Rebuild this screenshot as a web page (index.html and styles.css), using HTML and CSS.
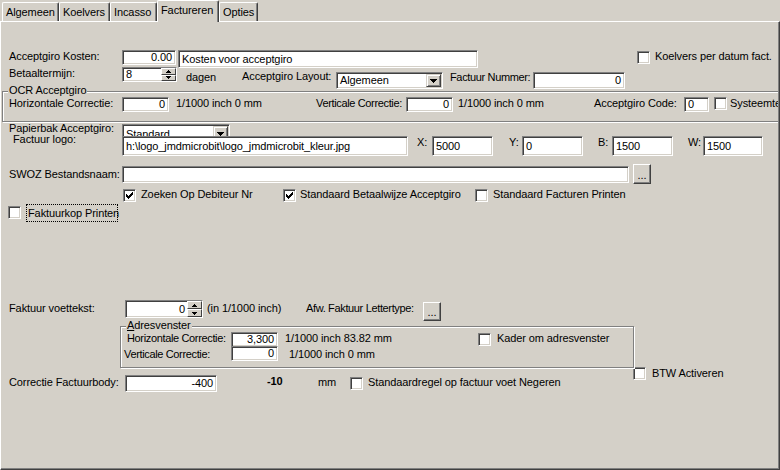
FILE: index.html
```html
<!DOCTYPE html>
<html lang="nl">
<head>
<meta charset="utf-8">
<title>Factureren</title>
<link rel="stylesheet" href="styles.css">
</head>
<body>
<div class="tabs">
  <div class="tab tab-alg">Algemeen</div>
  <div class="tab tab-koel">Koelvers</div>
  <div class="tab tab-inc">Incasso</div>
  <div class="tab tab-fac active">Factureren</div>
  <div class="tab tab-opt">Opties</div>
</div>
<div class="page">
 <div class="pagebody">

  <div class="row r-kosten">
    <span class="t lab mt1">Acceptgiro Kosten:</span>
    <div class="edit r e-kosten mt1">0.00</div>
    <div class="edit e-omschr ml2 mt1">Kosten voor acceptgiro</div>
    <span class="chk ml159 mt2"></span>
    <span class="t ml5 mt1">Koelvers per datum fact.</span>
  </div>

  <div class="row r-termijn">
    <span class="t lab">Betaaltermijn:</span>
    <div class="edit spin e-termijn"><span class="val">8</span><span class="spinbtns"><span class="sb"><svg width="5" height="3" viewBox="0 0 5 3"><path d="M2 0h1v1h1v1h1v1h-5v-1h1v-1h1z"/></svg></span><span class="sb"><svg width="5" height="3" viewBox="0 0 5 3"><path d="M0 0h5v1h-1v1h-1v1h-1v-1h-1v-1h-1z"/></svg></span></span></div>
    <span class="t ml9 mt4 w56">dagen</span>
    <span class="t mt3 w94">Acceptgiro Layout:</span>
    <div class="edit combo e-layout mt5"><span class="val">Algemeen</span><span class="cbtn"><svg width="7" height="4" viewBox="0 0 7 4"><path d="M0 0h7v1h-1v1h-1v1h-1v1h-1v-1h-1v-1h-1v-1h-1z"/></svg></span></div>
    <span class="t tight ml7 mt4 w83">Factuur Nummer:</span>
    <div class="edit r e-nummer mt5">0</div>
  </div>

  <div class="group g-ocr">
    <span class="gcap">OCR Acceptgiro</span>
    <div class="row r-ocr">
      <span class="t lab-g">Horizontale Correctie:</span>
      <div class="edit r e-corr">0</div>
      <span class="t ml7 w140">1/1000 inch 0 mm</span>
      <span class="t tight w90">Verticale Correctie:</span>
      <div class="edit r e-corr">0</div>
      <span class="t ml5 w136">1/1000 inch 0 mm</span>
      <span class="t w90">Acceptgiro Code:</span>
      <div class="edit e-code">0</div>
      <span class="chk ml5"></span>
      <span class="t ml3">Systeemtekst</span>
    </div>
  </div>

  <div class="row r-papier">
    <span class="t lab mt-1">Papierbak Acceptgiro:</span>
    <div class="edit combo e-papier mt1"><span class="val">Standard</span><span class="cbtn"><svg width="7" height="4" viewBox="0 0 7 4"><path d="M0 0h7v1h-1v1h-1v1h-1v1h-1v-1h-1v-1h-1v-1h-1z"/></svg></span></div>
  </div>

  <div class="row r-logo">
    <span class="t lab lab-logo mt-1">Factuur logo:</span>
    <div class="edit e-logo mt2">h:\logo_jmdmicrobit\logo_jmdmicrobit_kleur.jpg</div>
    <span class="t ml9 mt2 w15">X:</span>
    <div class="edit e-xy mt2">5000</div>
    <span class="t ml16 mt2 w13">Y:</span>
    <div class="edit e-xy mt2">0</div>
    <span class="t ml15 mt2 w14">B:</span>
    <div class="edit e-xy mt2">1500</div>
    <span class="t ml15 mt2 w15">W:</span>
    <div class="edit e-w mt2">1500</div>
  </div>

  <div class="row r-swoz">
    <span class="t lab mt4">SWOZ Bestandsnaam:</span>
    <div class="edit e-swoz mt2"></div>
    <div class="btn b-swoz ml4">...</div>
  </div>

  <div class="row r-opties">
    <span class="chk ml122"><svg width="9" height="9" viewBox="0 0 9 9" shape-rendering="crispEdges"><path d="M7 1h1v1h-1zM6 2h2v1h-2zM1 3h1v1h-1zM5 3h3v1h-3zM1 4h2v1h-2zM4 4h3v1h-3zM1 5h5v1h-5zM2 6h3v1h-3zM3 7h1v1h-1z"/></svg></span>
    <span class="t ml5 mt-1 w142">Zoeken Op Debiteur Nr</span>
    <span class="chk"><svg width="9" height="9" viewBox="0 0 9 9" shape-rendering="crispEdges"><path d="M7 1h1v1h-1zM6 2h2v1h-2zM1 3h1v1h-1zM5 3h3v1h-3zM1 4h2v1h-2zM4 4h3v1h-3zM1 5h5v1h-5zM2 6h3v1h-3zM3 7h1v1h-1z"/></svg></span>
    <span class="t ml4 mt-1 w175">Standaard Betaalwijze Acceptgiro</span>
    <span class="chk"></span>
    <span class="t ml5 mt-1">Standaard Facturen Printen</span>
  </div>

  <div class="row r-kop">
    <span class="chk ml7 mt2"></span>
    <span class="t focus">Faktuurkop Printen</span>
  </div>

  <div class="row r-voet">
    <span class="t lab lab-w mt2">Faktuur voettekst:</span>
    <div class="edit spin r e-voet"><span class="val">0</span><span class="spinbtns"><span class="sb"><svg width="5" height="3" viewBox="0 0 5 3"><path d="M2 0h1v1h1v1h1v1h-5v-1h1v-1h1z"/></svg></span><span class="sb"><svg width="5" height="3" viewBox="0 0 5 3"><path d="M0 0h5v1h-1v1h-1v1h-1v-1h-1v-1h-1z"/></svg></span></span></div>
    <span class="t ml4 mt2 w99">(in 1/1000 inch)</span>
    <span class="t tight mt2 w117">Afw. Faktuur Lettertype:</span>
    <div class="btn b-font mt2">...</div>
  </div>

  <div class="row r-adres">
    <div class="group g-adr">
      <span class="gcap"><u>A</u>dresvenster</span>
      <div class="row r-adr1">
        <span class="t tight lab-a1 mt1">Horizontale Correctie:</span>
        <div class="edit r e-corr mt1">3,300</div>
        <span class="t ml7 mt1 w193">1/1000 inch 83.82 mm</span>
        <span class="chk mt2"></span>
        <span class="t ml6 mt1">Kader om adresvenster</span>
      </div>
      <div class="row r-adr2">
        <span class="t tight lab-a2 mt1">Verticale Correctie:</span>
        <div class="edit r e-corr mt-1">0</div>
        <span class="t ml11 mt1">1/1000 inch 0 mm</span>
      </div>
    </div>
    <span class="chk chk-btw"></span>
    <span class="t ml6 btw-text">BTW Activeren</span>
  </div>

  <div class="row r-body">
    <span class="t lab lab-w mt2">Correctie Factuurbody:</span>
    <div class="edit r e-body mt1">-400</div>
    <span class="t bold ml50 mt1 w51">-10</span>
    <span class="t mt2 w32">mm</span>
    <span class="chk mt3"></span>
    <span class="t ml5 mt2">Standaardregel op factuur voet Negeren</span>
  </div>

 </div>
</div>
</body>
</html>
```
FILE: styles.css
```css
* { box-sizing: border-box; }
html, body { margin: 0; padding: 0; }
body {
  width: 780px;
  height: 470px;
  overflow: hidden;
  background: #d4d0c8;
  color: #000;
  font-family: "Liberation Sans", Arial, sans-serif;
  font-size: 11px;
  line-height: 13px;
  letter-spacing: -0.1px;
}

/* tabs */
.tabs {
  position: relative;
  z-index: 1;
  display: flex;
  align-items: flex-end;
  height: 21px;
  padding-left: 2px;
}
.tab {
  height: 19px;
  padding: 3px 0 0 3px;
  border: 1px solid #fff;
  border-bottom: 0;
  border-right-color: #404040;
  border-radius: 2px 2px 0 0;
  box-shadow: inset -1px 0 0 #808080;
  background: #d4d0c8;
  white-space: nowrap;
}
.tab-alg { width: 57px; }
.tab-koel { width: 51px; }
.tab-inc { width: 47px; }
.tab-fac { width: 62px; }
.tab-opt { width: 39px; }
.tab.active {
  height: 22px;
  margin-bottom: -1px;
}

/* page */
.page {
  height: 449px;
  border-top: 1px solid #fff;
  border-left: 1px solid #fff;
  border-right: 1px solid #404040;
  border-bottom: 1px solid #404040;
}
.pagebody {
  height: 100%;
  border-right: 1px solid #808080;
  border-bottom: 1px solid #808080;
  overflow: hidden;
}

/* rows */
.row { display: flex; align-items: flex-start; }
.row > * { flex-shrink: 0; }
.t { white-space: nowrap; }
.tight { letter-spacing: -0.35px; }
.bold { font-weight: bold; }
.lab { width: 121px; padding-left: 8px; }
.lab-logo { padding-left: 12px; }
.lab-w { width: 124px; }
.lab-g { width: 119px; padding-left: 6px; }
.lab-a1 { width: 110px; padding-left: 6px; }
.lab-a2 { width: 110px; padding-left: 3px; }

.r-kosten { margin-top: 27px; height: 18px; }
.r-termijn { height: 22px; }
.r-ocr { margin-top: 5px; height: 16px; }
.r-papier { margin-top: 1px; height: 11px; }
.r-logo { height: 22px; }
.r-swoz { margin-top: 8px; height: 20px; }
.r-opties { margin-top: 5px; height: 13px; }
.r-kop { margin-top: 2px; height: 18px; }
.r-voet { margin-top: 78px; height: 21px; }
.r-adres { margin-top: 5px; height: 42px; }
.r-adr1 { margin-top: 4px; height: 16px; }
.r-adr2 { height: 16px; }
.r-body { margin-top: 6px; height: 18px; }

/* spacing helpers */
.ml2 { margin-left: 2px; }
.ml3 { margin-left: 3px; }
.ml4 { margin-left: 4px; }
.ml5 { margin-left: 5px; }
.ml6 { margin-left: 6px; }
.ml7 { margin-left: 7px; }
.ml9 { margin-left: 9px; }
.ml11 { margin-left: 11px; }
.ml15 { margin-left: 15px; }
.ml16 { margin-left: 16px; }
.ml50 { margin-left: 50px; }
.ml122 { margin-left: 122px; }
.ml159 { margin-left: 159px; }
.mt-2 { margin-top: -2px; }
.mt-1 { margin-top: -1px; }
.mt1 { margin-top: 1px; }
.mt2 { margin-top: 2px; }
.mt3 { margin-top: 3px; }
.mt4 { margin-top: 4px; }
.mt5 { margin-top: 5px; }
.w13 { width: 13px; }
.w14 { width: 14px; }
.w15 { width: 15px; }
.w32 { width: 32px; }
.w51 { width: 51px; }
.w56 { width: 56px; }
.w83 { width: 83px; }
.w90 { width: 90px; }
.w94 { width: 94px; }
.w99 { width: 99px; }
.w117 { width: 117px; }
.w136 { width: 136px; }
.w140 { width: 140px; }
.w142 { width: 142px; }
.w175 { width: 175px; }
.w193 { width: 193px; }

/* sunken edit */
.edit {
  display: flex;
  align-items: center;
  background: #fff;
  border: 1px solid;
  border-color: #808080 #fff #fff #808080;
  box-shadow: inset 1px 1px 0 #404040, inset -1px -1px 0 #d4d0c8;
  padding: 0 3px;
  overflow: hidden;
  white-space: nowrap;
}
.edit.r { justify-content: flex-end; }
.e-kosten { width: 54px; height: 15px; }
.e-omschr { width: 300px; height: 18px; }
.e-termijn { width: 55px; height: 15px; }
.e-layout { width: 107px; height: 17px; }
.e-nummer { width: 92px; height: 17px; }
.e-corr { width: 47px; height: 15px; }
.e-code { width: 25px; height: 15px; }
.e-papier { width: 108px; height: 20px; }
.e-logo { width: 286px; height: 20px; }
.e-xy { width: 61px; height: 20px; }
.e-w { width: 60px; height: 20px; }
.e-swoz { width: 507px; height: 17px; }
.e-voet { width: 78px; height: 18px; }
.e-body { width: 92px; height: 17px; }

/* combo */
.combo { padding: 1px 1px 1px 2px; align-items: stretch; }
.combo .val { flex: 1; display: flex; align-items: center; padding-left: 1px; }
.cbtn {
  width: 15px;
  display: flex;
  align-items: center;
  justify-content: center;
  background: #d4d0c8;
  border: 1px solid;
  border-color: #d4d0c8 #404040 #404040 #d4d0c8;
  box-shadow: inset 1px 1px 0 #fff, inset -1px -1px 0 #808080;
}
.cbtn svg { display: block; }

/* spin */
.spin { padding: 0 0 0 3px; align-items: stretch; }
.spin .val { flex: 1; display: flex; align-items: center; }
.spin.r .val { justify-content: flex-end; padding-right: 2px; }
.spinbtns { width: 15px; display: flex; flex-direction: column; }
.sb {
  flex: 1;
  display: flex;
  align-items: center;
  justify-content: center;
  background: #d4d0c8;
  border: 1px solid;
  border-color: #fff #404040 #404040 #fff;
}
.sb svg { display: block; }

/* checkbox */
.chk {
  display: block;
  width: 13px;
  height: 13px;
  padding: 1px;
  background: #fff;
  border: 1px solid;
  border-color: #808080 #fff #fff #808080;
  box-shadow: inset 1px 1px 0 #404040, inset -1px -1px 0 #d4d0c8;
}
.chk svg { display: block; }
.chk-btw { margin: 41px 0 0 -1px; }
.btw-text { margin-top: 41px; }

/* focus rect */
.focus {
  margin-left: 5px;
  width: 92px;
  height: 18px;
  padding-left: 1px;
  border: 1px dotted #000;
  line-height: 16px;
}

/* raised button */
.btn {
  display: flex;
  align-items: center;
  justify-content: center;
  padding-top: 2px;
  background: #d4d0c8;
  border: 1px solid;
  border-color: #fff #404040 #404040 #fff;
  box-shadow: inset -1px -1px 0 #808080;
}
.b-swoz { width: 18px; height: 20px; }
.b-font { width: 18px; height: 19px; }

/* group boxes */
.group {
  position: relative;
  border: 1px solid #808080;
  box-shadow: inset 1px 1px 0 #fff, 1px 1px 0 #fff;
}
.gcap {
  position: absolute;
  top: -8px;
  left: 5px;
  padding: 0 1px;
  background: #d4d0c8;
  white-space: nowrap;
}
.g-ocr { margin: 2px 0 0 1px; width: 800px; height: 31px; }
.g-adr { margin-left: 119px; width: 514px; height: 42px; }
```
